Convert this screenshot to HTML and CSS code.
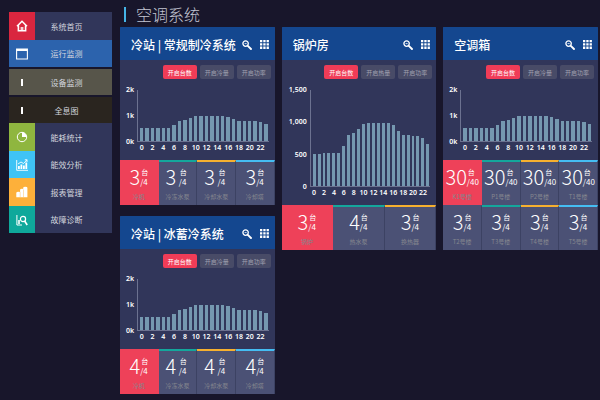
FILE: index.html
```
<!DOCTYPE html>
<html lang="zh-CN">
<head>
  <meta charset="UTF-8" />
  <meta name="viewport" content="width=device-width, initial-scale=1" />
  <title>空调系统</title>
  <link rel="stylesheet" href="styles.css">
</head>
<body>

  <!-- shared icons -->
  <svg class="sprite" aria-hidden="true">
    <symbol id="i-search" viewBox="0 0 10 10">
      <circle cx="3.6" cy="3.6" r="2.7" fill="none" stroke="currentColor" stroke-width="1.3"/>
      <path d="M2.6 3.6h2" stroke="currentColor" stroke-width=".8"/>
      <path d="M5.8 5.8L9 9" stroke="currentColor" stroke-width="1.9" stroke-linecap="round"/>
    </symbol>
    <symbol id="i-grid" viewBox="0 0 9 9">
      <path fill="currentColor" d="M0 0h2.3v2.3H0zM3.3 0h2.3v2.3H3.3zM6.6 0h2.3v2.3H6.6zM0 3.3h2.3v2.3H0zM3.3 3.3h2.3v2.3H3.3zM6.6 3.3h2.3v2.3H6.6zM0 6.6h2.3v2.3H0zM3.3 6.6h2.3v2.3H3.3zM6.6 6.6h2.3v2.3H6.6z"/>
    </symbol>
  </svg>

  <nav class="sidebar">
    <a class="item" href="#">
      <span class="icon red"><svg viewBox="0 0 12 12"><path d="M1 6.3L6 1.3l5 5M2.4 5.6v5.2h7.2V5.6" fill="none" stroke="#fff" stroke-width="1.6"/><path d="M4.6 10.5V7h2.8v3.5z" fill="#fff" opacity=".8"/></svg></span>
      <span class="text">系统首页</span>
    </a>
    <a class="item active" href="#">
      <span class="icon"><svg viewBox="0 0 12 12"><path d="M.6 1h10.8v10H.6z" fill="none" stroke="#fff" stroke-width="1.1"/><path d="M.6 2h10.8" stroke="#fff" stroke-width="2"/></svg></span>
      <span class="text">运行监测</span>
    </a>
    <a class="item sub" href="#">
      <span class="icon"><i class="tick"></i></span>
      <span class="text">设备监测</span>
    </a>
    <a class="item sub dark" href="#">
      <span class="icon"><i class="tick"></i></span>
      <span class="text">全息图</span>
    </a>
    <a class="item" href="#">
      <span class="icon green"><svg viewBox="0 0 12 12"><circle cx="6" cy="6" r="4.7" fill="none" stroke="#fff" stroke-width="1"/><path d="M6 6V1.3A4.7 4.7 0 0 1 10.7 6z" fill="#fff"/></svg></span>
      <span class="text">能耗统计</span>
    </a>
    <a class="item" href="#">
      <span class="icon blue"><svg viewBox="0 0 12 12"><path d="M.7 1v10.3H12" fill="none" stroke="#fff" stroke-width=".9"/><path d="M2 10V7h1.8v3zM4.5 10V5.5h1.8V10zM7 10V6.5h1.8V10zM9.4 10V3.5h1.8V10z" fill="#fff"/><path d="M2 5l3-2 2.5 1.5L11 .8M8.8.8H11V3" fill="none" stroke="#fff" stroke-width=".9"/></svg></span>
      <span class="text">能效分析</span>
    </a>
    <a class="item" href="#">
      <span class="icon orange"><svg viewBox="0 0 12 12"><path d="M.3 11.2V7Q.3 5.8 2.4 5.8L4.1 6V3.8Q4.1 2.8 6 2.8l1.2.2V1.8Q7.2.8 9.3.8t2.1 1v9.4z" fill="#fff"/><path d="M4.2 6v5M7.5 3.5V11" stroke="#fdb03a" stroke-width=".4"/></svg></span>
      <span class="text">报表管理</span>
    </a>
    <a class="item" href="#">
      <span class="icon teal"><svg viewBox="0 0 12 12"><path d="M.9 1v10H6" fill="none" stroke="#fff" stroke-width="1"/><path d="M2.2 10V6h1.6v4z" fill="#fff"/><circle cx="7" cy="5" r="2.6" fill="none" stroke="#fff" stroke-width="1.2"/><path d="M8.6 7l2.6 4" stroke="#fff" stroke-width="1.6"/></svg></span>
      <span class="text">故障诊断</span>
    </a>
  </nav>

  <main class="content">
    <h1>空调系统</h1>

    <div class="cards">
      <section class="card">
        <header>
          <h2>冷站 | 常规制冷系统</h2>
          <button aria-label="搜索"><svg class="search"><use href="#i-search"/></svg></button>
          <button aria-label="列表"><svg><use href="#i-grid"/></svg></button>
        </header>
        <div class="tabs">
          <button class="on">开启台数</button>
          <button>开启冷量</button>
          <button>开启功率</button>
        </div>
        <div class="chart" data-max="2000" data-ticks="2k|1k|0k"></div>
        <div class="tiles">
          <div class="tile red"><b>3</b><span><i>台</i>/4</span><small>冷机</small></div>
          <div class="tile teal"><b>3</b><span><i>台</i>/4</span><small>冷冻水泵</small></div>
          <div class="tile orange"><b>3</b><span><i>台</i>/4</span><small>冷却水泵</small></div>
          <div class="tile blue"><b>3</b><span><i>台</i>/4</span><small>冷却塔</small></div>
        </div>
      </section>

      <section class="card">
        <header>
          <h2>锅炉房</h2>
          <button aria-label="搜索"><svg class="search"><use href="#i-search"/></svg></button>
          <button aria-label="列表"><svg><use href="#i-grid"/></svg></button>
        </header>
        <div class="tabs">
          <button class="on">开启台数</button>
          <button>开启热量</button>
          <button>开启功率</button>
        </div>
        <div class="chart tall" data-max="1500" data-ticks="1,500|1,000|500|0"></div>
        <div class="tiles three">
          <div class="tile red"><b>3</b><span><i>台</i>/4</span><small>锅炉</small></div>
          <div class="tile teal"><b>4</b><span><i>台</i>/4</span><small>热水泵</small></div>
          <div class="tile orange"><b>3</b><span><i>台</i>/4</span><small>换热器</small></div>
        </div>
      </section>

      <section class="card">
        <header>
          <h2>空调箱</h2>
          <button aria-label="搜索"><svg class="search"><use href="#i-search"/></svg></button>
          <button aria-label="列表"><svg><use href="#i-grid"/></svg></button>
        </header>
        <div class="tabs">
          <button class="on">开启台数</button>
          <button>开启冷量</button>
          <button>开启功率</button>
        </div>
        <div class="chart" data-max="2000" data-ticks="2k|1k|0k"></div>
        <div class="tiles">
          <div class="tile red"><b>30</b><span><i>台</i>/40</span><small>K1号楼</small></div>
          <div class="tile teal"><b>30</b><span><i>台</i>/40</span><small>P1号楼</small></div>
          <div class="tile orange"><b>30</b><span><i>台</i>/40</span><small>P2号楼</small></div>
          <div class="tile blue"><b>30</b><span><i>台</i>/40</span><small>T1号楼</small></div>
          <div class="tile"><b>3</b><span><i>台</i>/4</span><small>T2号楼</small></div>
          <div class="tile teal"><b>3</b><span><i>台</i>/4</span><small>T3号楼</small></div>
          <div class="tile orange"><b>3</b><span><i>台</i>/4</span><small>T4号楼</small></div>
          <div class="tile blue"><b>3</b><span><i>台</i>/4</span><small>T5号楼</small></div>
        </div>
      </section>

      <section class="card second">
        <header>
          <h2>冷站 | 冰蓄冷系统</h2>
          <button aria-label="搜索"><svg class="search"><use href="#i-search"/></svg></button>
          <button aria-label="列表"><svg><use href="#i-grid"/></svg></button>
        </header>
        <div class="tabs">
          <button class="on">开启台数</button>
          <button>开启冷量</button>
          <button>开启功率</button>
        </div>
        <div class="chart" data-max="2000" data-ticks="2k|1k|0k"></div>
        <div class="tiles">
          <div class="tile red"><b>4</b><span><i>台</i>/4</span><small>冷机</small></div>
          <div class="tile teal"><b>4</b><span><i>台</i>/4</span><small>冷冻水泵</small></div>
          <div class="tile orange"><b>4</b><span><i>台</i>/4</span><small>冷却水泵</small></div>
          <div class="tile blue"><b>4</b><span><i>台</i>/4</span><small>冷却塔</small></div>
        </div>
      </section>
    </div>
  </main>

  <script src="chart.js"></script>
</body>
</html>
```

FILE: styles.css
```
* {
  box-sizing: border-box;
}
body {
  margin: 0;
  min-height: 100vh;
  display: flex;
  align-items: flex-start;
  gap: 8px;
  padding: 4px 2px 6px 9px;
  background: #18162b;
  color: #fff;
  font-family: "Noto Sans CJK SC", sans-serif;
}
button {
  padding: 0;
  border: none;
  background: none;
  color: inherit;
  font-family: inherit;
  cursor: pointer;
}
.sprite {
  display: none;
}

/* sidebar */
.sidebar {
  flex: 0 0 103px;
  margin-top: 8px;
}
.item {
  display: flex;
  align-items: center;
  height: 28px;
  background: #31365a;
  color: #d3d5de;
  font-size: 8px;
  text-decoration: none;
}
.item:nth-child(even) {
  height: 27px;
}
.item.active {
  background: #2c63ad;
}
.item.sub {
  height: 26px;
  margin-top: 2px;
  background: #57554a;
}
.item.sub.dark {
  background: #2a251f;
}
.icon {
  width: 26px;
  height: 100%;
  display: flex;
  align-items: center;
  justify-content: center;
}
.icon svg {
  width: 12px;
  height: 12px;
}
.icon.red { background: #d9263f; }
.icon.green { background: #8fb63f; }
.icon.blue { background: #3fc3f5; }
.icon.orange { background: #fdb03a; }
.icon.teal { background: #0fa89b; }
.tick {
  width: 2px;
  height: 7px;
  background: #fff;
}
.text {
  flex: 1;
  padding-right: 14px;
  text-align: center;
}

/* cards */
.content {
  flex: 1;
  min-width: 0;
}
h1 {
  margin: 3px 0 5px 4px;
  padding-left: 10px;
  border-left: 2px solid #45b4e6;
  font-size: 16px;
  font-weight: 300;
  line-height: 15px;
  color: #c3c5d3;
}
.cards {
  display: grid;
  grid-template-columns: repeat(3, minmax(0, 1fr));
  grid-template-rows: auto 11px auto;
  column-gap: 7px;
}
.card {
  grid-row: 1 / span 3;
  align-self: start;
  background: #31365a;
}
.card:first-child {
  grid-row: 1;
}
.card.second {
  grid-row: 3;
  grid-column: 1;
}
.card header {
  display: flex;
  align-items: center;
  gap: 8px;
  height: 33px;
  padding: 2px 6px 0 11px;
  border-radius: 1px 1px 0 0;
  background: #14478f;
}
h2 {
  flex: 1;
  min-width: 0;
  margin: 0;
  font-size: 12px;
  font-weight: 500;
  white-space: nowrap;
}
header svg {
  display: block;
  width: 9px;
  height: 9px;
}
header .search {
  width: 10px;
  height: 10px;
}
.tabs {
  display: flex;
  justify-content: flex-end;
  gap: 3px;
  padding: 5px 4px 0;
}
.tabs button {
  width: 34px;
  height: 14px;
  border-radius: 2px;
  background: #484b67;
  color: #a0a1b0;
  font-size: 6px;
}
.tabs .on {
  background: #f03c57;
  color: #fff;
}

/* bar chart */
.chart {
  display: grid;
  grid-template-columns: 14px 1fr;
  grid-template-rows: 52px 18px;
  column-gap: 3px;
  padding: 11px 6px 0 0;
  font: 600 7px "Noto Sans", sans-serif;
}
.chart.tall {
  grid-template-columns: 25px 1fr;
  grid-template-rows: 97px 18px;
}
.y-axis {
  display: flex;
  flex-direction: column;
  justify-content: space-between;
  margin: -4px 0;
  text-align: right;
  line-height: 8px;
}
.bars {
  display: grid;
  grid-template-columns: repeat(24, 1fr);
  align-items: end;
  padding-left: 1px;
  border-left: 1px solid #6c7290;
  border-bottom: 1px solid #6c7290;
}
.bar {
  margin: 0 1px;
  background: #7598b0;
}
.x-axis {
  grid-column: 2;
  display: grid;
  grid-template-columns: repeat(24, 1fr);
  padding: 2px 0 0 2px;
  line-height: 8px;
}
.x-axis span {
  display: flex;
  justify-content: center;
  min-width: 0;
}

/* unit counters */
.tiles {
  display: grid;
  grid-template-columns: repeat(4, 1fr);
}
.tiles.three {
  grid-template-columns: repeat(3, 1fr);
}
.tile {
  display: grid;
  grid-template-columns: auto auto;
  grid-template-rows: 29px 10px;
  row-gap: 1px;
  justify-content: center;
  align-items: center;
  height: 45px;
  border-top: 2px solid transparent;
  border-right: 1px solid #3c4263;
  background: #4b5175;
}
.tile.red {
  background: #ee4159;
  border-color: #ee4159;
}
.tile.teal { border-top-color: #14a79c; }
.tile.orange { border-top-color: #f6b02f; }
.tile.blue { border-top-color: #45bdf2; }
.tile b {
  font-size: 20px;
  font-weight: 300;
  line-height: 29px;
}
.tile span {
  font-size: 8px;
  line-height: 9px;
}
.tile i {
  display: block;
  padding-left: 1px;
  font-size: 7px;
  font-style: normal;
}
.tile small {
  grid-column: 1 / 3;
  color: #85878f;
  font-size: 6px;
  line-height: 10px;
  text-align: center;
}
```

FILE: chart.js
```
const load = [500, 500, 510, 510, 510, 510, 620, 795, 825, 890, 965, 980,
  990, 980, 990, 980, 955, 855, 800, 800, 780, 780, 750, 650];

document.querySelectorAll(".chart").forEach(function (chart) {
  const max = Number(chart.dataset.max);

  const ticks = chart.dataset.ticks.split("|")
    .map(t => `<span>${t}</span>`).join("");
  const bars = load
    .map(v => `<div class="bar" style="height: ${v / max * 100}%"></div>`).join("");
  const hours = load
    .map((v, i) => `<span>${i % 2 ? "" : i}</span>`).join("");

  chart.innerHTML = `
    <div class="y-axis">${ticks}</div>
    <div class="bars">${bars}</div>
    <div class="x-axis">${hours}</div>`;
});
```
